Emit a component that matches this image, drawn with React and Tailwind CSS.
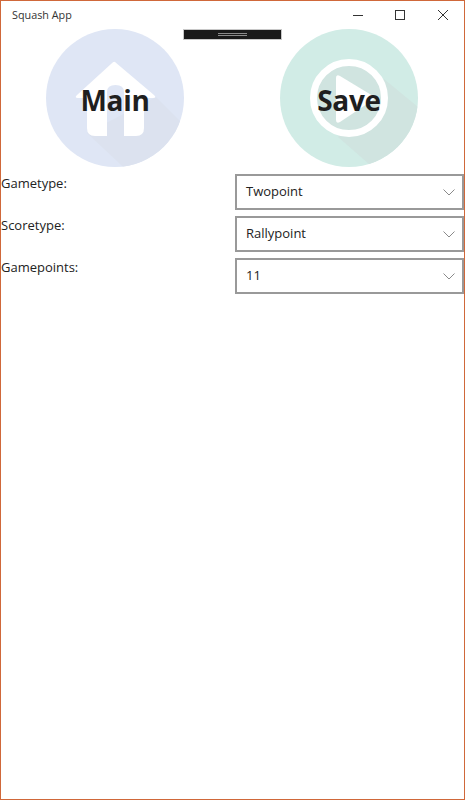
import React from "react";

const font = { sans: "font-['Open_Sans','Noto_Sans',sans-serif]" };

function HomeBadge() {
  return (
    <svg width="138" height="138" viewBox="0 0 138 138" className="[grid-area:1/1]">
      <defs>
        <clipPath id="homeClip"><circle cx="69" cy="69" r="69" /></clipPath>
      </defs>
      <circle cx="69" cy="69" r="69" fill="#dfe6f5" />
      <polygon points="110,68 150,108 150,150 90,150 41,104" fill="#dce2ef" clipPath="url(#homeClip)" />
      <path
        d="M69 33 L108 66 Q111 69 107 69 L98 69 L98 99 Q98 107 90 107 L78 107 L78 63 Q78 56 69.5 56 Q61 56 61 63 L61 107 L49 107 Q41 107 41 99 L41 69 L32 69 Q28 69 31 66 L65 35 Q68 32 69 33 Z"
        fill="#ffffff"
      />
    </svg>
  );
}

function PlayBadge() {
  return (
    <svg width="138" height="138" viewBox="0 0 138 138" className="[grid-area:1/1]">
      <defs>
        <clipPath id="playClip"><circle cx="69" cy="69" r="69" /></clipPath>
      </defs>
      <circle cx="69" cy="69" r="69" fill="#d1ece6" />
      <polygon points="104,50 150,88 150,150 90,136 58,108" fill="#d0e4e0" clipPath="url(#playClip)" />
      <circle cx="69" cy="69" r="35.5" fill="#d0e4e0" stroke="#ffffff" strokeWidth="7" />
      <path d="M56 49 Q56 45 60 47 L93 67 Q96 69 93 71 L60 93 Q56 95 56 91 Z" fill="#ffffff" />
    </svg>
  );
}

function BigButton({ label, children }) {
  return (
    <div className="grid place-items-center">
      {children}
      <span className={`[grid-area:1/1] ${font.sans} relative top-[2px] text-[28px] font-bold leading-none tracking-[-0.3px] text-[#1f1f1f]`}>
        {label}
      </span>
    </div>
  );
}

function Combo({ value }) {
  return (
    <div className="flex h-[36px] items-center justify-between border-2 border-[#999999] bg-white pl-[9px] pr-[7px]">
      <span className={`${font.sans} text-[13px] text-[#222222]`}>{value}</span>
      <svg width="12" height="7" viewBox="0 0 12 7" fill="none" stroke="#8a8a8a" strokeWidth="1">
        <path d="M0.5 0.5 L6 6 L11.5 0.5" />
      </svg>
    </div>
  );
}

const rows = [
  ["Gametype:", "Twopoint"],
  ["Scoretype:", "Rallypoint"],
  ["Gamepoints:", "11"],
];

export default function App() {
  return (
    <div className="relative flex h-[800px] w-[465px] flex-col overflow-hidden border border-[#d0683a] bg-white">
      {/* title bar */}
      <div className="flex h-[28px] shrink-0 items-center justify-between pl-[11px]">
        <span className={`${font.sans} text-[10.8px] text-[#333333]`}>Squash App</span>
        <div className="flex items-center text-[#333333]">
          <div className="flex w-[42px] justify-center">
            <svg width="10" height="10" viewBox="0 0 10 10" stroke="currentColor" fill="none"><path d="M0 5.5 H10" /></svg>
          </div>
          <div className="flex w-[42px] justify-center">
            <svg width="10" height="10" viewBox="0 0 10 10" stroke="currentColor" fill="none"><rect x="0.5" y="0.5" width="9" height="9" /></svg>
          </div>
          <div className="flex w-[43px] justify-center">
            <svg width="10" height="10" viewBox="0 0 10 10" stroke="currentColor" fill="none"><path d="M0 0 L10 10 M10 0 L0 10" /></svg>
          </div>
        </div>
      </div>

      {/* debug toolbar */}
      <div className="absolute left-[182px] top-[28px] flex h-[11px] w-[99px] flex-col items-center justify-center gap-[1px] border border-[#c8c8c8] bg-[#1a1a1a]">
        <div className="h-px w-[29px] bg-[#8a8a8a]" />
        <div className="h-px w-[29px] bg-[#8a8a8a]" />
      </div>

      {/* big buttons */}
      <div className="flex h-[138px] shrink-0">
        <div className="ml-[45px]"><BigButton label="Main"><HomeBadge /></BigButton></div>
        <div className="ml-[96px]"><BigButton label="Save"><PlayBadge /></BigButton></div>
      </div>

      {/* settings */}
      <div className="mt-[7px] flex flex-col gap-[6px]">
        {rows.map(([label, value]) => (
          <div key={label} className="grid grid-cols-[234px_229px]">
            <span className={`${font.sans} text-[13px] leading-[18px] text-[#222222]`}>{label}</span>
            <Combo value={value} />
          </div>
        ))}
      </div>
    </div>
  );
}
